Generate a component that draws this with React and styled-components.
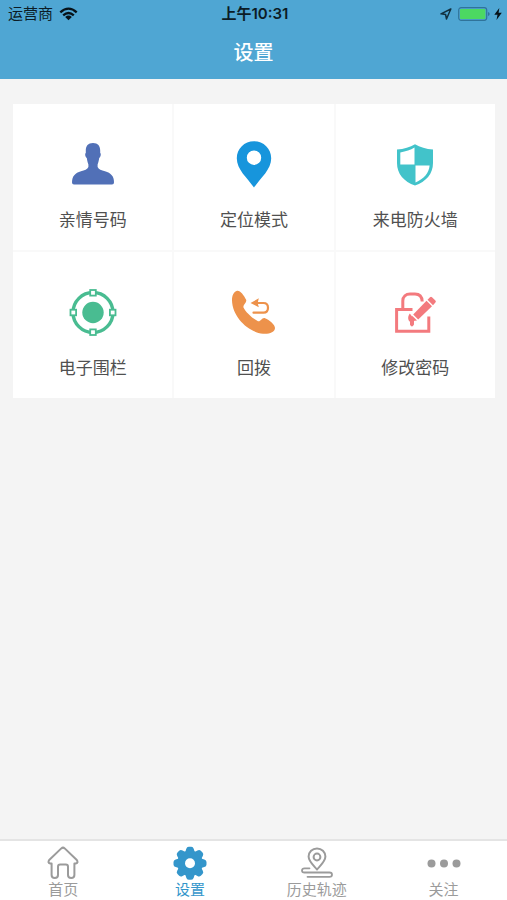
import React from "react";
import styled, { createGlobalStyle } from "styled-components";

const GlobalStyle = createGlobalStyle`
  *, *::before, *::after { box-sizing: border-box; }
  body {
    margin: 0;
    background: #f4f4f4;
    font-family: Inter, "Noto Sans CJK SC", sans-serif;
  }
  button { font: inherit; border: 0; cursor: pointer; }
  svg { display: block; flex: none; }
`;

const Page = styled.div`
  min-height: 100vh;
  display: flex;
  flex-direction: column;
`;

const Header = styled.header`
  background: #4fa6d3;
`;

const StatusBar = styled.div`
  display: grid;
  grid-template-columns: 1fr auto 1fr;
  align-items: center;
  height: 27px;
  padding: 0 5px 0 8px;
  color: #0c1c26;
  font-size: 15px;
  line-height: 20px;
`;

const Carrier = styled.div`
  display: flex;
  align-items: center;
  gap: 6px;
`;

const Clock = styled.time`
  font-size: 15px;
  font-weight: 600;
`;

const Indicators = styled.div`
  display: flex;
  align-items: center;
  justify-content: flex-end;
  gap: 4px;
`;

const Title = styled.h1`
  margin: 0;
  height: 52px;
  color: #fff;
  font-size: 20px;
  font-weight: 500;
  line-height: 52px;
  text-align: center;
`;

const Main = styled.main`
  flex: 1;
  padding: 25px 12px 24px 13px;
`;

const TileGrid = styled.div`
  display: grid;
  grid-template-columns: repeat(3, 1fr);
  gap: 2px;
  background: #f9f9f9;
`;

const Tile = styled.button`
  display: flex;
  flex-direction: column;
  align-items: center;
  gap: 19px;
  padding: 37px 0 17px;
  background: #fff;
  color: #505050;
`;

const TileLabel = styled.span`
  font-size: 17px;
  line-height: 25px;
`;

const TabBar = styled.nav`
  position: sticky;
  bottom: 0;
  display: grid;
  grid-template-columns: repeat(4, 1fr);
  border-top: 2px solid #e4e4e4;
  background: #fff;
`;

const Tab = styled.button`
  display: flex;
  flex-direction: column;
  align-items: center;
  padding: 5px 0 0;
  background: none;
  color: ${(p) => (p.$active ? "#3496cb" : "#9b9b9b")};
`;

const TabLabel = styled.span`
  font-size: 15px;
  line-height: 20px;
`;

const TileIcon = ({ children }) => (
  <svg width="48" height="48" viewBox="0 0 48 48" fill="none" aria-hidden="true">
    {children}
  </svg>
);

const TabIcon = ({ children }) => (
  <svg width="34" height="34" viewBox="0 0 34 34" fill="none" stroke="currentColor" strokeWidth="2" strokeLinecap="round" strokeLinejoin="round" aria-hidden="true">
    {children}
  </svg>
);

const PersonIcon = () => (
  <TileIcon>
    <path fill="#5170b7" d="M24 2C19 2 16.8 5 16.8 9.5V12C15.8 12.5 16.1 16 17.8 17C18.2 20 18.8 22 19.4 23.5V26C18.5 28.5 15.5 29.2 12 30.2C6 32 3 35 3 41.5Q3 43.5 5 43.5H43Q45 43.5 45 41.5C45 35 42 32 36 30.2C32.5 29.2 29.5 28.5 28.6 26V23.5C29.2 22 29.8 20 30.2 17C31.9 16 32.2 12.5 31.2 12V9.5C31.2 5 29 2 24 2Z" />
  </TileIcon>
);

const PinIcon = () => (
  <TileIcon>
    <path fill="#1795dc" fillRule="evenodd" d="M24 .3C14.4.3 6.8 7.8 6.8 17.2C6.8 28.5 17 36.5 24 46.5C31 36.5 41.2 28.5 41.2 17.2C41.2 7.8 33.6.3 24 .3ZM24 9.5A7.2 7.2 0 1 1 24 23.9A7.2 7.2 0 1 1 24 9.5Z" />
  </TileIcon>
);

const ShieldIcon = () => (
  <TileIcon>
    <path fill="#42c3ca" d="M24 3.2C19 6.2 13 8 6 8.6V22C6 33 13 40.5 24 44.6C35 40.5 42 33 42 22V8.6C35 8 29 6.2 24 3.2Z" />
    <path fill="#fff" d="M23.5 6.5C19.5 9 15 10.5 9.3 11.4V23.5H23.5ZM24.5 24.5H38.6C38 32 33 37.7 24.5 41.5Z" />
  </TileIcon>
);

const FenceIcon = () => (
  <TileIcon>
    <g stroke="#49bc91">
      <circle cx="24" cy="23.5" r="20" strokeWidth="3.4" />
      <g fill="#fff" strokeWidth="1.8">
        <rect x="21.2" y="1" width="5.6" height="5.6" />
        <rect x="21.2" y="40.4" width="5.6" height="5.6" />
        <rect x="1.5" y="20.7" width="5.6" height="5.6" />
        <rect x="40.9" y="20.7" width="5.6" height="5.6" />
      </g>
    </g>
    <circle cx="24" cy="23.5" r="10.7" fill="#49bc91" />
  </TileIcon>
);

const CallbackIcon = () => (
  <TileIcon>
    <path fill="#ed924b" d="M6.5 2C10 .8 13.5 6 16 10.5C17.5 13.5 12.5 15.5 13.5 18.5C15.5 23 22.5 29.5 28 32.2C30.5 33.3 32 28 35 29.2C39.5 31 45 35.5 45 39C45 43 39 45.3 33 44.7C18 43 2.5 28 2 11.5C1.9 7 3.5 3 6.5 2Z" />
    <path stroke="#ed924b" strokeWidth="2.2" strokeLinecap="round" d="M26 14H33.5C36.5 14 38 16 38 18.8C38 21.8 36.5 23.7 33.5 23.7H23.5" />
    <path fill="#ed924b" d="M20.5 14L28.8 9.3L27.7 14L28.8 18.3Z" />
  </TileIcon>
);

const PasswordIcon = () => (
  <TileIcon>
    <g stroke="#f37a7e" strokeWidth="3">
      <path d="M21.5 20.6H5.6V42.2H37.8V27.5" />
      <path d="M11.8 20V12C11.8 7.5 15 5 19 5H24C28.5 5 31 7.8 31.2 12.5" />
    </g>
    <g fill="#f37a7e">
      <path d="M22.2 25.6L35.5 11.8L41 17.2L27.2 30.6Z" />
      <path d="M36.5 10.8L39 8.3Q40 7.3 41 8.3L44.4 11.6Q45.4 12.6 44.4 13.6L42 16.2Z" />
      <path d="M21.2 26.8L26 31.4L20.5 32.3Z" />
      <path d="M18.8 24.5C20.7 26.5 22.3 29.5 23 32V35.5Q21 39.5 19 35.8V32.8C16.3 30.5 17 27 18.8 24.5Z" />
    </g>
  </TileIcon>
);

const HomeIcon = () => (
  <TabIcon>
    <path d="M15.3 2.4Q17 .9 18.7 2.4L30.8 14Q32.6 17 29.6 17.6H28.4V29Q28.4 32 25.2 32Q22 32 22 29V20.8Q22 18.6 19.8 18.6H14.2Q12 18.6 12 20.8V29Q12 32 8.8 32Q5.6 32 5.6 29V17.6H4.4Q1.4 17 3.2 14Z" />
  </TabIcon>
);

const GearIcon = () => (
  <TabIcon>
    <g fill="currentColor" stroke="none">
      <circle cx="17" cy="17.3" r="12.8" />
      {[0, 45, 90, 135, 180, 225, 270, 315].map((angle) => (
        <path key={angle} transform={`rotate(${angle} 17 17.3)`} d="M12 7L13.2 3Q13.8.8 15.8.8H18.2Q20.2.8 20.8 3L22 7Z" />
      ))}
    </g>
    <circle cx="17" cy="17.3" r="5" fill="#fff" stroke="none" />
  </TabIcon>
);

const TrackIcon = () => (
  <TabIcon>
    <path d="M17 23.5C13.5 19.5 8.6 15.5 8.6 10.6A8.4 8.2 0 0 1 25.4 10.6C25.4 15.5 20.5 19.5 17 23.5Z" />
    <circle cx="17" cy="11" r="3.4" />
    <path strokeWidth="1.8" d="M9.5 22.3H4.5Q2 22.3 2 24.4Q2 26.5 4.5 26.5H29.5Q32 26.5 32 28.7Q32 30.8 29.5 30.8H7.5" />
  </TabIcon>
);

const MoreIcon = () => (
  <TabIcon>
    <g fill="currentColor" stroke="none">
      <circle cx="4.5" cy="17.5" r="4" />
      <circle cx="17" cy="17.5" r="4" />
      <circle cx="29.5" cy="17.5" r="4" />
    </g>
  </TabIcon>
);

const WifiIcon = () => (
  <svg width="19" height="14" viewBox="0 0 19 14" fill="none" stroke="#071219" strokeWidth="2.3" role="img" aria-label="Wi-Fi">
    <path d="M1.3 5.4Q9.5-2.2 17.7 5.4M4.2 8.3Q9.5 3.6 14.8 8.3" />
    <path fill="#071219" stroke="none" d="M6.2 9.9Q9.5 7.2 12.8 9.9L9.5 13.2Z" />
  </svg>
);

const LocationIcon = () => (
  <svg width="14" height="12" viewBox="0 0 14 12" fill="none" stroke="#12303f" strokeWidth="1.5" strokeLinejoin="round" aria-hidden="true">
    <path d="M10.8 1L1 5.8L5.6 6.5L6.5 11Z" />
  </svg>
);

const BatteryIcon = () => (
  <svg width="32" height="14" viewBox="0 0 32 14" role="img" aria-label="电池">
    <rect x=".7" y=".7" width="28" height="12.6" rx="2.5" fill="#4fa6d3" stroke="#30739a" strokeWidth="1.2" />
    <rect x="2" y="2" width="25.4" height="10" rx="1" fill="#4cd862" />
    <path d="M30 5Q31.7 5.5 31.7 7Q31.7 8.5 30 9Z" fill="#30739a" />
  </svg>
);

const BoltIcon = () => (
  <svg width="8" height="12" viewBox="0 0 8 12" fill="#071219" aria-hidden="true">
    <path d="M5.3 0L.3 6.8H3.5L2.5 12L7.8 4.8H4.6Z" />
  </svg>
);

const tiles = [
  { label: "亲情号码", Icon: PersonIcon },
  { label: "定位模式", Icon: PinIcon },
  { label: "来电防火墙", Icon: ShieldIcon },
  { label: "电子围栏", Icon: FenceIcon },
  { label: "回拨", Icon: CallbackIcon },
  { label: "修改密码", Icon: PasswordIcon },
];

const tabs = [
  { label: "首页", Icon: HomeIcon },
  { label: "设置", Icon: GearIcon, active: true },
  { label: "历史轨迹", Icon: TrackIcon },
  { label: "关注", Icon: MoreIcon },
];

export default function App() {
  return (
    <Page>
      <GlobalStyle />
      <Header>
        <StatusBar>
          <Carrier>
            运营商
            <WifiIcon />
          </Carrier>
          <Clock>上午10:31</Clock>
          <Indicators>
            <LocationIcon />
            <BatteryIcon />
            <BoltIcon />
          </Indicators>
        </StatusBar>
        <Title>设置</Title>
      </Header>
      <Main>
        <TileGrid>
          {tiles.map(({ label, Icon }) => (
            <Tile key={label} type="button">
              <Icon />
              <TileLabel>{label}</TileLabel>
            </Tile>
          ))}
        </TileGrid>
      </Main>
      <TabBar>
        {tabs.map(({ label, Icon, active }) => (
          <Tab key={label} type="button" $active={active} aria-current={active ? "page" : undefined}>
            <Icon />
            <TabLabel>{label}</TabLabel>
          </Tab>
        ))}
      </TabBar>
    </Page>
  );
}
